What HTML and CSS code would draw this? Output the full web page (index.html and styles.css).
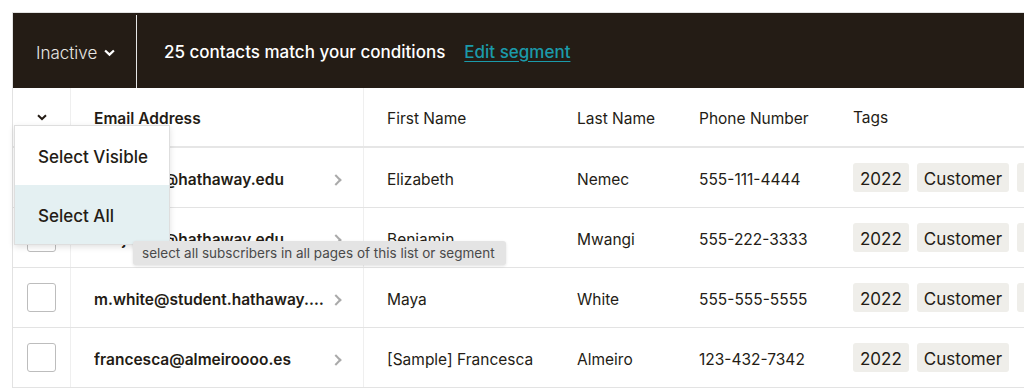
FILE: index.html
```html
<!DOCTYPE html>
<html>
<head>
<meta charset="utf-8">
<link rel="stylesheet" href="styles.css">
</head>
<body>
<div class="page">
  <div class="segbar">
    <div class="seg-select">Inactive <svg class="chev-w" viewBox="0 0 10 7" width="11" height="8"><path d="M1 1.2 L5 5 L9 1.2" fill="none" stroke="#fff" stroke-width="2"/></svg></div>
    <div class="seg-info">
      <span class="count">25 contacts match your conditions</span>
      <a class="edit" href="#">Edit segment</a>
    </div>
  </div>
  <div class="table">
    <div class="row head">
      <div class="c c-check"><svg viewBox="0 0 10 7" width="10" height="7"><path d="M1 1.2 L5 5 L9 1.2" fill="none" stroke="#241c15" stroke-width="2"/></svg></div>
      <div class="c c-email">Email Address</div>
      <div class="c c-first">First Name</div>
      <div class="c c-last">Last Name</div>
      <div class="c c-phone">Phone Number</div>
      <div class="c c-tags">Tags</div>
    </div>
    <div class="row">
      <div class="c c-check"><span class="box"></span></div>
      <div class="c c-email"><span class="em">elizabeth@hathaway.edu</span><span class="arr"></span></div>
      <div class="c c-first">Elizabeth</div>
      <div class="c c-last">Nemec</div>
      <div class="c c-phone">555-111-4444</div>
      <div class="c c-tags"><span class="tag">2022</span><span class="tag">Customer</span><span class="tag">VIP</span></div>
    </div>
    <div class="row">
      <div class="c c-check"><span class="box"></span></div>
      <div class="c c-email"><span class="em">benjamin@hathaway.edu</span><span class="arr"></span></div>
      <div class="c c-first">Benjamin</div>
      <div class="c c-last">Mwangi</div>
      <div class="c c-phone">555-222-3333</div>
      <div class="c c-tags"><span class="tag">2022</span><span class="tag">Customer</span><span class="tag">VIP</span></div>
    </div>
    <div class="row">
      <div class="c c-check"><span class="box"></span></div>
      <div class="c c-email"><span class="em">m.white@student.hathaway.edu</span><span class="arr"></span></div>
      <div class="c c-first">Maya</div>
      <div class="c c-last">White</div>
      <div class="c c-phone">555-555-5555</div>
      <div class="c c-tags"><span class="tag">2022</span><span class="tag">Customer</span><span class="tag">VIP</span></div>
    </div>
    <div class="row">
      <div class="c c-check"><span class="box"></span></div>
      <div class="c c-email"><span class="em">francesca@almeiroooo.es</span><span class="arr"></span></div>
      <div class="c c-first">[Sample] Francesca</div>
      <div class="c c-last">Almeiro</div>
      <div class="c c-phone">123-432-7342</div>
      <div class="c c-tags"><span class="tag">2022</span><span class="tag">Customer</span></div>
    </div>

    <div class="menu">
      <div class="mi">Select Visible</div>
      <div class="mi active">Select All</div>
    </div>
    <div class="tooltip">select all subscribers in all pages of this list or segment</div>
  </div>
</div>
</body>
</html>
```

FILE: styles.css
```css
* { box-sizing: border-box; }
html, body { margin: 0; padding: 0; background: #fff; }
body {
  font-family: "Inter", "Liberation Sans", sans-serif;
  color: #241c15;
  overflow: hidden;
  width: 1024px;
  height: 391px;
}
.page {
  margin: 12px 0 0 12px;
  border-left: 1px solid #e2e2e2;
  border-top: 1px solid #e2e2e2;
}
.segbar {
  display: flex;
  align-items: stretch;
  height: 75px;
  background: #241c15;
  color: #fff;
}
.seg-select {
  width: 124px;
  padding-left: 23px;
  display: flex;
  align-items: center;
  gap: 7px;
  font-size: 17px;
  font-weight: 300;
  color: #e8e6e3;
  border-right: 1px solid #e6e6e6;
  margin-top: 2px;
  padding-top: 2px;
}
.chev-w { margin-top: 1px; }
.seg-info {
  display: flex;
  align-items: center;
  padding-left: 27px;
  padding-top: 2px;
  gap: 19px;
  font-size: 17px;
}
.count { font-weight: 500; }
.edit {
  color: #1b9aaa;
  font-weight: 500;
  text-decoration: underline;
  text-underline-offset: 3px;
}
.table { position: relative; }
.row {
  display: flex;
  height: 60px;
  border-bottom: 1px solid #e3e3e3;
  font-size: 15.5px;
}
.row.head { border-bottom: 2px solid #e6e6e6; }
.c {
  display: flex;
  align-items: center;
  padding-left: 23px;
  padding-top: 3px;
  white-space: nowrap;
}
.c-check {
  width: 58px;
  padding-left: 0;
  padding-top: 0;
  justify-content: center;
  border-right: 1px solid #efefef;
}
.head .c-check { padding-top: 0; }
.c-email {
  width: 293px;
  border-right: 1px solid #efefef;
  font-weight: 600;
  padding-right: 20px;
}
.c-first { width: 190px; }
.c-last { width: 122px; }
.c-phone { width: 154px; }
.c-tags { flex: 1; gap: 8px; overflow: hidden; padding-top: 0; }
.box {
  width: 29px;
  height: 29px;
  border: 1px solid #bdbdbd;
  border-radius: 3px;
}
.em {
  width: 236px;
  overflow: hidden;
  text-overflow: ellipsis;
}
.arr {
  width: 8px;
  height: 8px;
  border-right: 2px solid #aaa;
  border-top: 2px solid #aaa;
  transform: rotate(45deg);
  margin-left: 2px;
  margin-top: 2px;
}
.tag {
  background: #efeeea;
  border-radius: 3px;
  height: 29px;
  padding: 2px 7px 0;
  display: flex;
  align-items: center;
  font-size: 17px;
  flex: none;
}
.menu {
  position: absolute;
  left: 1px;
  top: 37px;
  width: 156px;
  background: #fff;
  border: 1px solid #dedede;
  box-shadow: 0 2px 6px rgba(0,0,0,0.12);
}
.mi {
  height: 59px;
  padding-left: 23px;
  padding-top: 2px;
  display: flex;
  align-items: center;
  font-size: 17px;
  font-weight: 500;
}
.mi.active { background: #e4f0f2; }
.tooltip {
  position: absolute;
  left: 120px;
  top: 153px;
  width: 373px;
  height: 24px;
  background: #e4e4e4;
  border-radius: 3px;
  box-shadow: 0 1px 3px rgba(0,0,0,0.12);
  font-size: 13.5px;
  color: #4a4a4a;
  padding-left: 9px;
  display: flex;
  align-items: center;
}
```
